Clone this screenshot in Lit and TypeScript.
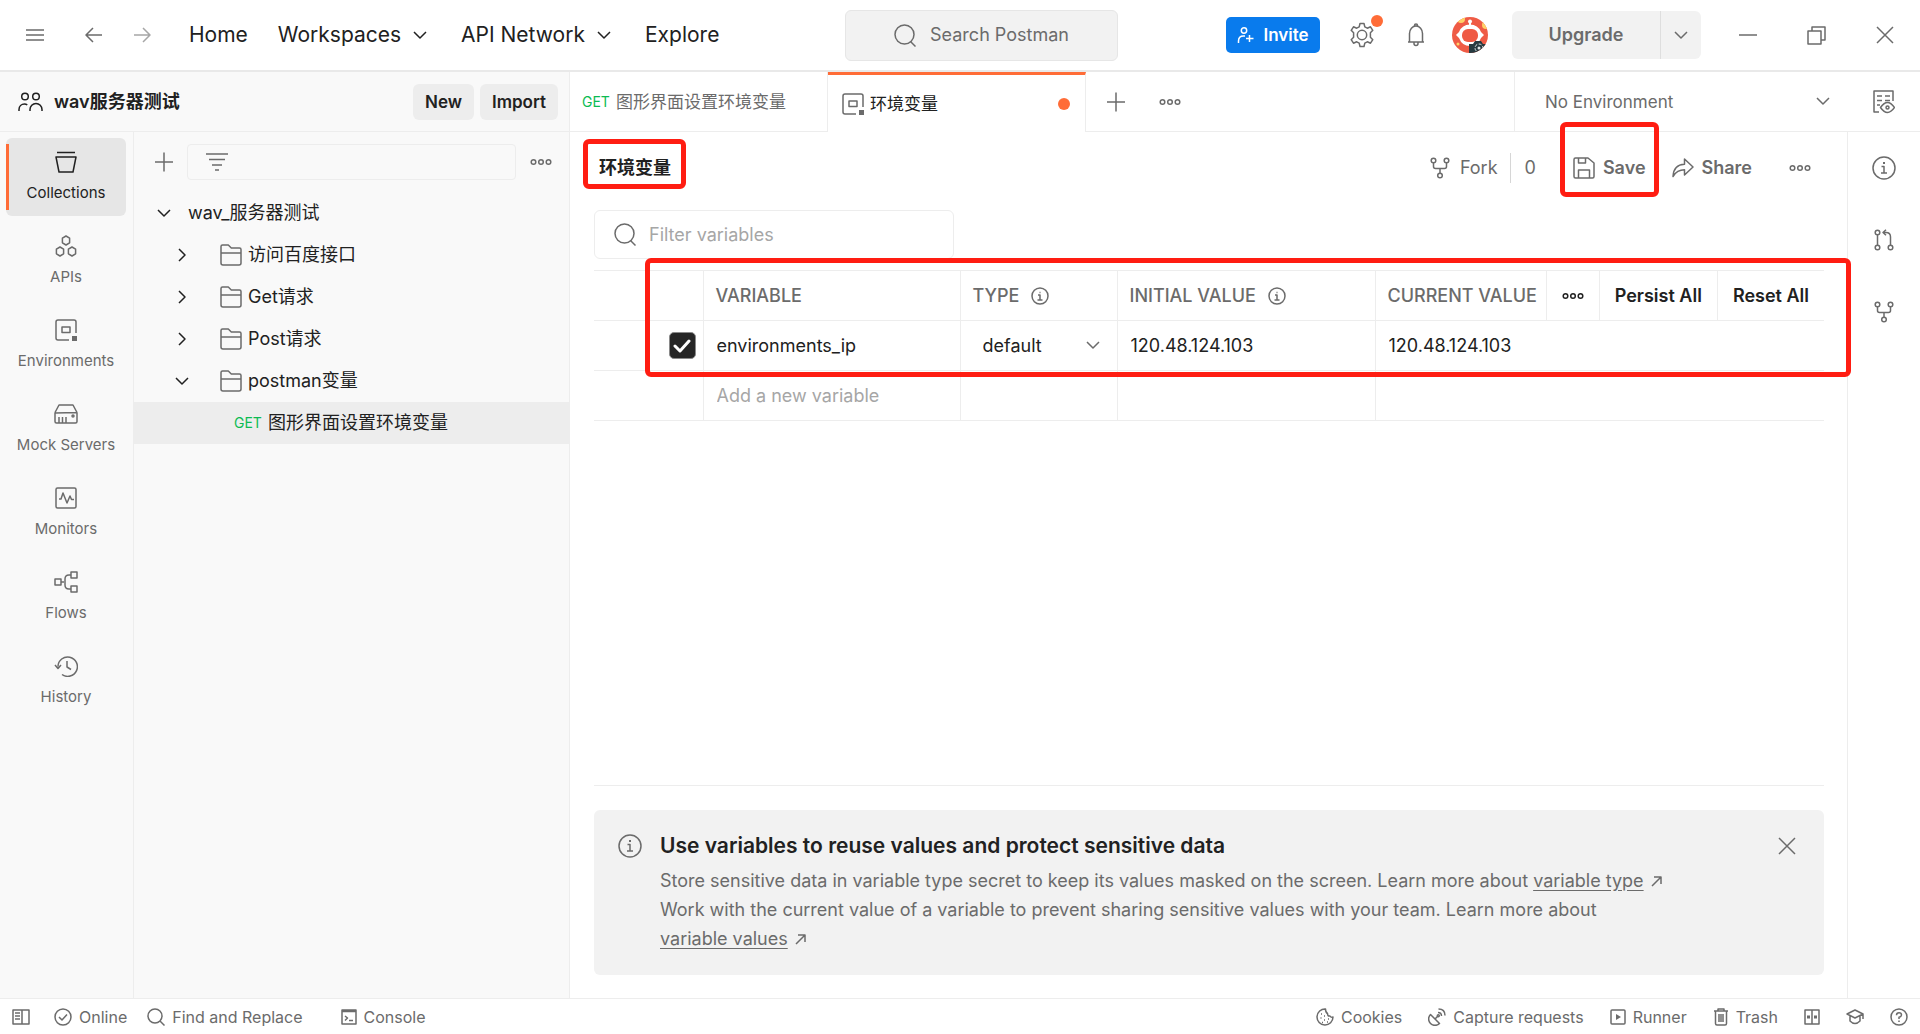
import { LitElement, html, css, svg, nothing, type SVGTemplateResult } from "lit";
import { customElement, state } from "lit/decorators.js";
import { classMap } from "lit/directives/class-map.js";

/** Stroke icons, each drawn in a view box of its natural size: [width, height, shapes]. */
const ICONS: Record<string, [number, number, SVGTemplateResult]> = {
  menu: [18, 12, svg`<path d="M0 1h18M0 6h18M0 11h18" />`],
  back: [18, 16, svg`<path d="M17 8H1M8 1L1 8l7 7" />`],
  forward: [18, 16, svg`<path d="M1 8h16M10 1l7 7-7 7" />`],
  down: [14, 9, svg`<path d="M1 1l6 6 6-6" />`],
  right: [9, 14, svg`<path d="M1 1l6 6-6 6" />`],
  search: [23, 23, svg`<circle cx="10.5" cy="10.5" r="9.5" /><path d="M16.5 17.5l5 5" />`],
  invite: [18, 18, svg`<circle cx="7" cy="4.5" r="2.7" /><path d="M1.5 17v-2c0-3 2-5 5-5h1.500M12.500 9v7M9 12.500h7.500" />`],
  gear: [24, 26, svg`<circle cx="12" cy="13" r="4.700" /><path d="M10 1.500h4l.8 3.400 2.500 1.300 3.200-1.400 2.300 3.500-2.400 2.500v4.400l2.400 2.500-2.300 3.500-3.200-1.400-2.500 1.300-.8 3.400h-4l-.8-3.400-2.500-1.300-3.200 1.400-2.300-3.500 2.400-2.500v-4.400l-2.400-2.500 2.300-3.500 3.200 1.400 2.500-1.300z" />`],
  bell: [18, 24, svg`<path d="M1 19h16M2.500 19v-8.500a6.500 7.500 0 0 1 13 0V19M7.500 3.200V2.500a1.500 1.500 0 0 1 3 0v.7M7 19v1.500a2 2 0 0 0 4 0V19" />`],
  minimise: [18, 2, svg`<path d="M0 1h18" />`],
  restore: [19, 19, svg`<path d="M1 5h13v13H1zM5 5V1h13v13h-4" />`],
  close: [18, 18, svg`<path d="M1 1l16 16M17 1L1 17" />`],
  team: [25, 20, svg`<circle cx="7" cy="4.500" r="3.300" /><circle cx="18" cy="4.500" r="3.300" /><path d="M1 19v-1.500c0-3.500 2.500-5.500 5.500-5.500 1 0 2 .3 2.800.8M12 19v-1.500a6 6 0 0 1 12 0V19" />`],
  plus: [18, 20, svg`<path d="M0 10h18M9 0.500v19" />`],
  lines: [22, 18, svg`<path d="M0 1h22M3 6.500h16M6 12h10M9 17h4" />`],
  dots: [22, 8, svg`<circle cx="3.500" cy="4" r="2.300" /><circle cx="11" cy="4" r="2.300" /><circle cx="18.500" cy="4" r="2.300" />`],
  folder: [22, 22, svg`<path d="M1 19V2.500Q1 1 2.500 1h5.800l3 3H19.500Q21 4 21 5.500V19Q21 21 19 21H3Q1 21 1 19zM1 9h20" />`],
  collections: [22, 22, svg`<path d="M2 1.500h18M1 6h20l-3 15H4z" />`],
  apis: [22, 22, svg`<path d="M11 1l3.600 2.200v4.600L11 10 7.400 7.800V3.200zM5 12l3.600 2.200v4.600L5 21l-3.600-2.200v-4.600zM17 12l3.600 2.200v4.600L17 21l-3.600-2.200v-4.600z" />`],
  environments: [22, 22, svg`<path d="M14 21H3Q1 21 1 19V3Q1 1 3 1h16q2 0 2 2v11M7 8h8v5.500H7z" /><path class="solid" d="M17 17h5v5h-5z" />`],
  servers: [24, 20, svg`<path d="M1 9v8.500Q1 19 2.500 19h19q1.500 0 1.500-1.500V8.500zM1 8.500L5 1h14l4 7.500M5 19v-6M8.500 19v-6M12 19v-6" /><circle cx="19" cy="12" r="1" />`],
  monitors: [22, 22, svg`<rect x="1" y="1" width="20" height="20" rx="1.500" /><path d="M4 12h2l2-6 4 10 3-7 1.500 3.500H19" />`],
  flows: [24, 22, svg`<path d="M1 8h6v6H1zM17 1h6v6h-6zM17 15h6v6h-6zM7 11h3M17 4h-2q-4 0-4 4v6q0 4 4 4h2" />`],
  history: [24, 22, svg`<path d="M4 11.500A9.700 9.700 0 1 1 8 19.500M1 10l3 3.500L7 10M13 6v6l4 2.500" />`],
  summary: [22, 24, svg`<path d="M6 22H1V1h19v10M4 6h5M12 6h5M4 10.500h5M12 10.500h5M4 15h3" /><path d="M7.500 17.500q3.500-5 7-5t7 5q-3.500 5-7 5t-7-5z" /><circle cx="14.500" cy="17.500" r="1.500" />`],
  fork: [20, 22, svg`<circle cx="3.500" cy="3.500" r="2.300" /><circle cx="16.500" cy="3.500" r="2.300" /><circle cx="10" cy="18.500" r="2.300" /><path d="M3.500 6v3.500Q3.500 11.500 5.500 11.500h9q2 0 2-2V6M10 11.500V16" />`],
  pull: [20, 22, svg`<circle cx="3.500" cy="3.500" r="2.300" /><circle cx="3.500" cy="18.500" r="2.300" /><circle cx="16.500" cy="18.500" r="2.300" /><path d="M3.500 6v10M16.500 16V8q0-4.500-4.500-4.500H9M12 .8L9 3.500l3 2.800" />`],
  save: [22, 22, svg`<path d="M1 2.500Q1 1 2.500 1H15l6 5v13.500q0 1.500-1.500 1.500h-17Q1 21 1 19.500zM5.500 1v5h7V1M5.500 21v-8h11v8" />`],
  share: [22, 20, svg`<path d="M1 18.500C1.500 10 6 6.500 12.500 6.300V1l8.500 8-8.500 8v-5.200C7.500 11.800 4 13.500 1 18.500z" />`],
  info: [24, 24, svg`<circle cx="12" cy="12" r="11" /><path d="M9.500 10.500H12V17M9 17h6" /><path class="solid" d="M11 6h2v2h-2z" />`],
  infoSmall: [18, 18, svg`<circle cx="9" cy="9" r="8" /><path d="M7 8h2v5M6.500 13h5M8.500 5.500h1" />`],
  check: [18, 14, svg`<path d="M2 7l5 5 9-10" />`],
  external: [11, 11, svg`<path d="M1 10l9-9M3 1h7v7" />`],
  sidebar: [18, 16, svg`<path d="M1 1h16v14H1zM10 1v14M3 4h5M3 7h5M3 10h5" />`],
  online: [18, 18, svg`<circle cx="9" cy="9" r="8" /><path d="M5 9l3 3 5-5.500" />`],
  find: [18, 18, svg`<circle cx="8" cy="8" r="7" /><path d="M13 13l4.500 4.500" />`],
  console: [16, 16, svg`<path d="M1 1h14v14H1zM1 2.500h14M4 7l2.500 2L4 11.500M8 11.500h4" />`],
  cookie: [18, 18, svg`<path d="M9.500 1A8 8 0 1 0 17 9q-2 .8-3-1-2.500.5-2.500-2.500-2-1-2-4.500z" /><path d="M5 6h1M8 8h1M4.500 10h1M8 12h1M12 11h1M11 14h1M6 14.500h1" />`],
  capture: [18, 18, svg`<path d="M2.500 6.500a6 6 0 0 0 9 9zM7 11l3-3M10 4.500q3.500 0 3.500 3.500M10.500 1q6.500 0 6.500 6.500" /><circle cx="10.300" cy="7.700" r="1" />`],
  runner: [16, 16, svg`<rect x="1" y="1" width="14" height="14" rx="1" /><path class="solid" d="M6 5l5 3-5 3z" />`],
  trash: [16, 18, svg`<path d="M1 3h14M5 2.500V1h6v1.500M2.500 3v12.500Q2.500 17 4 17h8q1.500 0 1.500-1.500V3M6 6v8M8 6v8M10 6v8" />`],
  panes: [16, 16, svg`<path d="M1 1h14v14H1zM8 1v14" /><path class="solid" d="M3 6.500h3v3H3zM10 6.500h3v3h-3z" />`],
  learn: [18, 16, svg`<path d="M1 5l8-4 8 4-8 4zM4 7v5q5 5 10 0V7M17 5v5" />`],
  help: [18, 18, svg`<circle cx="9" cy="9" r="8" /><path d="M6.500 7.200q0-2.500 2.500-2.500t2.500 2.200Q11.500 8.500 9 9.200V11M9 12.500V14" />`],
};

const icon = (name: string) => {
  const [w, h, shapes] = ICONS[name];
  return html`<svg class="icon" width=${w} height=${h} viewBox="0 0 ${w} ${h}" aria-hidden="true">${shapes}</svg>`;
};

const NAV: [string, string][] = [
  ["Collections", "collections"],
  ["APIs", "apis"],
  ["Environments", "environments"],
  ["Mock Servers", "servers"],
  ["Monitors", "monitors"],
  ["Flows", "flows"],
  ["History", "history"],
];

const FOLDERS: { name: string; open: boolean }[] = [
  { name: "访问百度接口", open: false },
  { name: "Get请求", open: false },
  { name: "Post请求", open: false },
  { name: "postman变量", open: true },
];

@customElement("app-root")
export class AppRoot extends LitElement {
  @state() private section = "Collections";

  static styles = css`
    :host {
      --ink: #212121;
      --muted: #6b6b6b;
      --faint: #a6a6a6;
      --line: #ededed;
      --panel: #f9f9f9;
      --fill: #f2f2f2;
      --orange: #ff6c37;
      --mark: #ff1d12;
      display: grid;
      grid-template-rows: auto 1fr auto;
      min-height: 100vh;
      font: 400 17px/24px Inter, "Noto Sans CJK SC", sans-serif;
      color: var(--muted);
      background: #fff;
    }
    *, *::before, *::after { box-sizing: border-box; }
    button, input, select { font: inherit; color: inherit; background: none; border: 0; margin: 0; padding: 0; min-width: 0; }
    button, a, select { cursor: pointer; }
    button { display: inline-flex; align-items: center; justify-content: center; white-space: nowrap; }
    select { appearance: none; }
    input::placeholder { color: var(--faint); opacity: 1; }
    p, h1, h2 { margin: 0; }
    .icon { display: block; flex: none; fill: none; stroke: currentColor; stroke-width: 1.5; stroke-linejoin: round; }
    .icon .solid { fill: currentColor; stroke: none; }
    .push { margin-left: auto; }

    .top { display: flex; align-items: center; height: 72px; border-bottom: 2px solid #e9e9e9; padding: 0 26px; }
    .top-left { display: flex; align-items: center; flex: 1 1 0; color: var(--muted); }
    .top-left .back { margin-left: 41px; }
    .top-left .forward { margin: 0 38px 0 30px; color: var(--faint); }
    .menu-links { display: flex; gap: 30px; font-size: 21px; color: var(--ink); }
    .menu-links button, .menu-links a { display: inline-flex; align-items: center; gap: 12px; color: inherit; text-decoration: none; white-space: nowrap; }
    .menu-links .drop { margin-right: 4px; }
    .global-search { display: flex; align-items: center; justify-content: center; gap: 13px; width: 273px; height: 51px; margin-left: 43px; background: var(--fill); border: 1px solid #e6e6e6; border-radius: 6px; font-size: 18px; }
    .top-right { display: flex; align-items: center; justify-content: flex-end; flex: 1 1 0; }
    .invite { gap: 8px; width: 94px; height: 36px; border-radius: 5px; background: #097bed; color: #fff; font-weight: 600; font-size: 17px; }
    .settings { position: relative; margin-left: 30px; }
    .badge { position: absolute; top: -7px; right: -9px; width: 12px; height: 12px; border-radius: 50%; background: var(--orange); }
    .bell { margin-left: 33px; }
    .avatar { margin-left: 27px; }
    .avatar svg { display: block; }
    .upgrade { display: flex; margin-left: 24px; height: 48px; border-radius: 6px; background: var(--fill); font-weight: 600; font-size: 18px; }
    .upgrade button:first-child { width: 149px; border-right: 1px solid #dedede; }
    .upgrade button:last-child { width: 40px; }
    .window { display: flex; align-items: center; gap: 50px; margin-left: 38px; }

    .body { display: grid; grid-template-columns: 570px minmax(0, 1fr); }
    .side { display: grid; grid-template: 60px 1fr / 134px minmax(0, 1fr); background: var(--panel); border-right: 1px solid var(--line); }
    .workspace { grid-column: 1 / -1; display: flex; align-items: center; gap: 6px; padding: 0 11px 0 18px; border-bottom: 1px solid var(--line); color: var(--ink); font-weight: 600; }
    .workspace h2 { flex: 1; margin-left: 5px; font-size: 18px; font-weight: 600; }
    .workspace button { height: 36px; padding: 0 12px; border-radius: 6px; background: var(--line); font-weight: 600; font-size: 17px; }
    .nav { display: flex; flex-direction: column; gap: 6px; padding: 6px 7px 6px 6px; border-right: 1px solid var(--line); font-size: 15px; line-height: 20px; }
    .nav button { flex-direction: column; gap: 10px; height: 78px; border-radius: 6px; justify-content: flex-start; padding-top: 13px; position: relative; }
    .nav button.active { background: #e6e6e6; color: var(--ink); }
    .nav button.active::before { content: ""; position: absolute; left: 0; top: 6px; bottom: 6px; width: 3px; background: var(--orange); }
    .nav .icon { height: 22px; }
    .tree { color: var(--ink); font-size: 18px; }
    .tree-tools { display: flex; align-items: center; gap: 14px; height: 60px; padding: 0 17px 0 21px; color: var(--muted); }
    .tree-filter { display: flex; align-items: center; gap: 8px; flex: 1; min-width: 0; height: 36px; padding: 0 18px; border: 1px solid var(--line); border-radius: 4px; }
    .tree-filter input { flex: 1; outline: none; }
    .tree-row { display: flex; align-items: center; width: 100%; height: 42px; justify-content: flex-start; }
    .tree-row .arrow { display: flex; justify-content: center; width: 24px; }
    .root { padding-left: 18px; gap: 12px; }
    .child { padding-left: 36px; }
    .child .folder { display: flex; margin: 0 6px 0 26px; color: var(--muted); }
    .leaf { padding-left: 100px; gap: 6px; background: var(--line); }
    .get { color: #0cbb52; font-size: 14px; }

    .main { display: grid; grid-template: 60px 1fr / minmax(0, 1fr) 73px; min-width: 0; }
    .tabs { grid-column: 1 / -1; display: flex; align-items: stretch; }
    .tab { justify-content: flex-start; width: 258px; gap: 6px; padding-left: 12px; border-bottom: 1px solid var(--line); border-right: 1px solid var(--line); }
    .tab.active { color: var(--ink); padding: 0 15px 0 14px; border-bottom: 0; border-top: 3px solid var(--orange); }
    .tab.active .icon { color: var(--muted); }
    .dirty { width: 12px; height: 12px; border-radius: 50%; background: var(--orange); margin-left: auto; }
    .tab-tools { display: flex; flex: 1; align-items: center; gap: 34px; padding-left: 21px; border-bottom: 1px solid var(--line); }
    .env { display: grid; grid-template-columns: 1fr auto; align-items: center; width: 333px; padding: 0 17px 0 30px; border-left: 1px solid var(--line); border-bottom: 1px solid var(--line); }
    .env select, .env .icon { grid-row: 1; }
    .env select { grid-column: 1 / -1; height: 40px; }
    .env .icon { grid-column: 2; pointer-events: none; }
    .quick { display: flex; align-items: center; justify-content: center; width: 73px; border-bottom: 1px solid var(--line); }

    .editor { display: flex; flex-direction: column; padding: 0 23px 23px 24px; min-width: 0; }
    .editor-head { display: flex; align-items: center; height: 72px; font-size: 18px; }
    .title { position: relative; padding: 0 5px; color: var(--ink); font-size: 18px; line-height: 24px; font-weight: 700; }
    .marked { position: relative; }
    .mark { position: absolute; border: 5px solid var(--mark); border-radius: 6px; pointer-events: none; z-index: 1; }
    .mark.on-title { inset: -17px -10px -9px -11px; }
    .mark.on-save { inset: -34px -13px -17px -13px; }
    .mark.on-table { left: 51px; right: -27px; top: -12px; height: 119px; }
    .editor-head button { gap: 10px; height: 24px; }
    .fork-count { height: 30px; line-height: 30px; margin-left: 12px; padding-left: 14px; border-left: 1px solid #d6d6d6; }
    .actions { display: flex; align-items: center; margin-left: auto; }
    .actions .strong { font-weight: 600; gap: 8px; }
    .actions .save { margin-left: 37px; }
    .actions .share { margin-left: 26px; }
    .actions .more { margin: 0 13px 0 37px; }
    .filter { display: flex; align-items: center; gap: 12px; width: 360px; height: 49px; margin-top: 6px; padding: 0 19px; border: 1px solid var(--line); border-radius: 6px; font-size: 18px; }
    .filter input { flex: 1; outline: none; }

    .grid-wrap { position: relative; margin-top: 11px; }
    .vars { width: 100%; border-collapse: collapse; table-layout: fixed; color: var(--ink); font-size: 18px; }
    .vars th, .vars td { height: 50px; padding: 0 12px; border: 0 solid var(--line); border-width: 1px 0; text-align: left; font-weight: 400; }
    .vars th + th, .vars td + td, .vars td + th { border-left-width: 1px; }
    .vars thead th { color: var(--muted); font-weight: 500; }
    .vars tbody td { padding: 0 13px; }
    .vars .c-pick { width: 109px; }
    .vars .c-name { width: 257px; }
    .vars .c-type { width: 157px; }
    .vars .c-init { width: 258px; }
    .vars input[type="text"] { width: 100%; outline: none; }
    .vars .head { display: flex; align-items: center; gap: 12px; white-space: nowrap; }
    .vars th.current { padding-right: 0; }
    .vars .current .head { gap: 4px; }
    .head-tools { display: flex; align-self: stretch; flex: 1; height: 49px; justify-content: flex-end; color: var(--ink); }
    .head-tools button { border-left: 1px solid var(--line); padding: 0 15px; font-weight: 600; }
    .vars td.pick { padding: 0 7px 0 0; }
    .check { display: grid; place-items: center; width: 27px; height: 27px; margin-left: auto; }
    .check > * { grid-area: 1 / 1; }
    .check input { appearance: none; width: 27px; height: 27px; border-radius: 5px; border: 1px solid var(--muted); }
    .check input:checked { background: #262626; border-color: #8a8a8a; }
    .check .icon { color: #fff; stroke-width: 3; pointer-events: none; stroke-linecap: round; }
    .vars td.type { padding: 0 17px 0 22px; }
    .type-pick { display: grid; grid-template-columns: 1fr auto; align-items: center; }
    .type-pick select { grid-area: 1 / 1 / 2 / 3; height: 30px; }
    .type-pick .icon { grid-area: 1 / 2; pointer-events: none; color: var(--muted); }

    .hint-zone { margin-top: auto; padding-top: 24px; border-top: 1px solid var(--line); }
    .hint { display: flex; align-items: flex-start; gap: 18px; padding: 24px 28px 22px 24px; border-radius: 6px; background: var(--fill); }
    .hint .text { flex: 1; max-width: 1004px; font-size: 18px; line-height: 29px; }
    .hint h2 { margin-bottom: 8px; color: var(--ink); font-size: 21px; line-height: 24px; font-weight: 600; }
    .hint a { color: inherit; white-space: nowrap; text-underline-offset: 3px; }
    .outward .icon { display: inline-block; margin-left: 7px; }
    .hint > button { height: 24px; }
    .rail { display: flex; flex-direction: column; align-items: center; gap: 48px; padding-top: 24px; border-left: 1px solid var(--line); }
    .rail button { height: 24px; }

    .status { display: flex; align-items: center; height: 36px; padding: 0 12px; border-top: 1px solid var(--line); font-size: 16px; }
    .status button { gap: 7px; }
    .status .left, .status .right { display: flex; align-items: center; gap: 26px; }
    .status .left { gap: 20px; }
    .status .left button:first-child { margin-right: 4px; }
    .status .left button:last-child { margin-left: 18px; }
  `;

  private renderTop() {
    return html`
      <header class="top">
        <div class="top-left">
          <button aria-label="Menu">${icon("menu")}</button>
          <button class="back" aria-label="Back">${icon("back")}</button>
          <button class="forward" aria-label="Forward">${icon("forward")}</button>
          <nav class="menu-links">
            <a href="#home">Home</a>
            <button class="drop">Workspaces ${icon("down")}</button>
            <button class="drop">API Network ${icon("down")}</button>
            <a href="#explore">Explore</a>
          </nav>
        </div>
        <button class="global-search">${icon("search")} Search Postman</button>
        <div class="top-right">
          <button class="invite">${icon("invite")} Invite</button>
          <button class="settings" aria-label="Settings">${icon("gear")}<span class="badge"></span></button>
          <button class="bell" aria-label="Notifications">${icon("bell")}</button>
          <button class="avatar" aria-label="Account">
            <svg width="36" height="36" viewBox="0 0 36 36" aria-hidden="true">
              <clipPath id="disc"><circle cx="18" cy="18" r="18" /></clipPath>
              <g clip-path="url(#disc)">
                <path fill="#ef5b45" d="M0 0h36v36H0z" />
                <circle cx="9" cy="2" r="4" fill="#ffd166" />
                <circle cx="34" cy="8" r="4" fill="#ffd166" />
                <circle cx="6" cy="27" r="1.500" fill="#ffd166" />
                <circle cx="18" cy="4.500" r="2" fill="#fff" />
                <path fill="#fff" d="M17 5h2v4h-2zM4 18q2-2 3-3Q10 7.500 18 7.500T29 15q1 1 3 3-2 2-3 3-3 8-11 8T7 21q-1-1-3-3z" />
                <rect x="10" y="12" width="16" height="13" rx="6" fill="#ef5b45" />
                <path fill="#263a40" d="M17 27h4l2-3h6l2 3h5v9H17z" />
                <circle cx="27" cy="31" r="4" fill="none" stroke="#dfe7e9" stroke-dasharray="3 1.500" />
                <circle cx="27" cy="31" r="1.500" fill="#dfe7e9" />
              </g>
            </svg>
          </button>
          <div class="upgrade">
            <button>Upgrade</button>
            <button aria-label="Upgrade options">${icon("down")}</button>
          </div>
          <div class="window">
            <button aria-label="Minimise">${icon("minimise")}</button>
            <button aria-label="Restore">${icon("restore")}</button>
            <button aria-label="Close window">${icon("close")}</button>
          </div>
        </div>
      </header>
    `;
  }

  private renderSide() {
    return html`
      <aside class="side">
        <div class="workspace">
          ${icon("team")}
          <h2>wav服务器测试</h2>
          <button>New</button>
          <button>Import</button>
        </div>
        <nav class="nav">
          ${NAV.map(
            ([label, glyph]) => html`
              <button class=${classMap({ active: this.section === label })} @click=${() => (this.section = label)}>
                ${icon(glyph)} ${label}
              </button>
            `,
          )}
        </nav>
        <div class="tree">
          <div class="tree-tools">
            <button aria-label="Create collection">${icon("plus")}</button>
            <label class="tree-filter">${icon("lines")}<input type="text" aria-label="Filter collections" /></label>
            <button aria-label="More">${icon("dots")}</button>
          </div>
          <button class="tree-row root"><span class="arrow">${icon("down")}</span>wav_服务器测试</button>
          ${FOLDERS.map(
            (f) => html`
              <button class="tree-row child">
                <span class="arrow">${icon(f.open ? "down" : "right")}</span>
                <span class="folder">${icon("folder")}</span>${f.name}
              </button>
            `,
          )}
          <button class="tree-row leaf"><span class="get">GET</span>图形界面设置环境变量</button>
        </div>
      </aside>
    `;
  }

  private renderTable() {
    return html`
      <div class="grid-wrap">
        <table class="vars">
          <colgroup>
            <col class="c-pick" /><col class="c-name" /><col class="c-type" /><col class="c-init" /><col />
          </colgroup>
          <thead>
            <tr>
              <td></td>
              <th scope="col">VARIABLE</th>
              <th scope="col"><span class="head">TYPE ${icon("infoSmall")}</span></th>
              <th scope="col"><span class="head">INITIAL VALUE ${icon("infoSmall")}</span></th>
              <th scope="col" class="current">
                <span class="head">
                  CURRENT VALUE
                  <span class="head-tools">
                    <button aria-label="Columns">${icon("dots")}</button>
                    <button>Persist All</button>
                    <button>Reset All</button>
                  </span>
                </span>
              </th>
            </tr>
          </thead>
          <tbody>
            <tr>
              <td class="pick">
                <label class="check"><input type="checkbox" checked aria-label="Enabled" />${icon("check")}</label>
              </td>
              <td><input type="text" aria-label="Variable" value="environments_ip" /></td>
              <td class="type">
                <label class="type-pick">
                  <select aria-label="Type"><option>default</option></select>${icon("down")}
                </label>
              </td>
              <td><input type="text" aria-label="Initial value" value="120.48.124.103" /></td>
              <td><input type="text" aria-label="Current value" value="120.48.124.103" /></td>
            </tr>
            <tr>
              <td></td>
              <td><input type="text" aria-label="New variable" placeholder="Add a new variable" /></td>
              <td></td>
              <td></td>
              <td></td>
            </tr>
          </tbody>
        </table>
        <span class="mark on-table"></span>
      </div>
    `;
  }

  private renderMain() {
    const link = (text: string) => html`<span class="outward"><a href="#docs">${text}</a>${icon("external")}</span>`;
    return html`
      <section class="main">
        <div class="tabs">
          <button class="tab"><span class="get">GET</span>图形界面设置环境变量</button>
          <button class="tab active">${icon("environments")}环境变量<span class="dirty"></span></button>
          <div class="tab-tools">
            <button aria-label="New tab">${icon("plus")}</button>
            <button aria-label="Tab options">${icon("dots")}</button>
          </div>
          <label class="env">
            <select aria-label="Environment"><option>No Environment</option></select>${icon("down")}
          </label>
          <button class="quick" aria-label="Environment quick look">${icon("summary")}</button>
        </div>
        <div class="editor">
          <div class="editor-head">
            <h1 class="title">环境变量<span class="mark on-title"></span></h1>
            <div class="actions">
              <button>${icon("fork")} Fork</button>
              <span class="fork-count">0</span>
              <button class="strong save marked">${icon("save")} Save<span class="mark on-save"></span></button>
              <button class="strong share">${icon("share")} Share</button>
              <button class="more" aria-label="More actions">${icon("dots")}</button>
            </div>
          </div>
          <label class="filter">${icon("search")}<input type="text" aria-label="Filter variables" placeholder="Filter variables" /></label>
          ${this.renderTable()}
          <div class="hint-zone">
            <div class="hint">
              ${icon("info")}
              <div class="text">
                <h2>Use variables to reuse values and protect sensitive data</h2>
                <p>Store sensitive data in variable type secret to keep its values masked on the screen. Learn more about ${link("variable type")}</p>
                <p>Work with the current value of a variable to prevent sharing sensitive values with your team. Learn more about ${link("variable values")}</p>
              </div>
              <button class="push" aria-label="Dismiss">${icon("close")}</button>
            </div>
          </div>
        </div>
        <div class="rail">
          <button aria-label="Details">${icon("info")}</button>
          <button aria-label="Pull requests">${icon("pull")}</button>
          <button aria-label="Forks">${icon("fork")}</button>
        </div>
      </section>
    `;
  }

  private renderStatus() {
    const item = (glyph: string, text: string, label?: string) =>
      html`<button aria-label=${label ?? text}>${icon(glyph)}${text || nothing}</button>`;
    return html`
      <footer class="status">
        <div class="left">
          ${item("sidebar", "", "Toggle sidebar")}${item("online", "Online")}${item("find", "Find and Replace")}${item("console", "Console")}
        </div>
        <div class="right push">
          ${item("cookie", "Cookies")}${item("capture", "Capture requests")}${item("runner", "Runner")}${item("trash", "Trash")}
          ${item("panes", "", "Two-pane view")}${item("learn", "", "Learn")}${item("help", "", "Help")}
        </div>
      </footer>
    `;
  }

  render() {
    return html`
      ${this.renderTop()}
      <div class="body">${this.renderSide()}${this.renderMain()}</div>
      ${this.renderStatus()}
    `;
  }
}
